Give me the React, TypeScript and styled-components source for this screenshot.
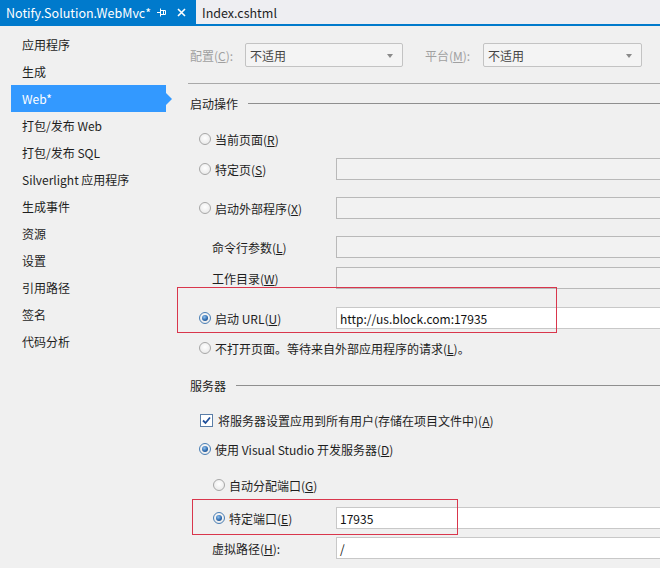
import React from "react";
import styled, { createGlobalStyle } from "styled-components";

const GlobalStyle = createGlobalStyle`
  html, body {
    margin: 0;
    padding: 0;
    overflow: hidden;
    background: #f0f0f0;
  }
  body {
    font-family: "Noto Sans CJK SC", "Noto Sans", sans-serif;
    font-size: 12px;
    color: #1e1e1e;
  }
`;

const Frame = styled.div`
  width: 676px;
  height: 568px;
  display: flex;
  flex-direction: column;
`;

const TabBar = styled.div`
  display: flex;
  height: 24px;
  border-bottom: 2px solid #007acc;
  background: #eeeef2;
`;

const ActiveTab = styled.div`
  width: 196px;
  box-sizing: border-box;
  background: #007acc;
  color: #fff;
  display: flex;
  align-items: center;
  padding: 0 0 0 6px;
  font-size: 12.5px;
`;

const TabTitle = styled.span`
  flex: 1;
  white-space: nowrap;
`;

const TabIcon = styled.svg`
  margin-right: 10px;
  flex: none;
`;

const Tab = styled.div`
  display: flex;
  align-items: center;
  padding: 0 6px;
  font-size: 12.5px;
  color: #1e1e1e;
`;

const Body = styled.div`
  display: flex;
  flex: 1;
  padding-top: 5px;
`;

const Sidebar = styled.div`
  width: 188px;
  flex: none;
`;

const SideItem = styled.div<{ $active?: boolean }>`
  position: relative;
  height: 27px;
  line-height: 27px;
  width: 155px;
  margin-left: 11px;
  padding-left: 11px;
  box-sizing: border-box;
  white-space: nowrap;
  background: ${({ $active }) => ($active ? "#3399ff" : "transparent")};
  color: ${({ $active }) => ($active ? "#fff" : "#1e1e1e")};

  &::after {
    content: "";
    display: ${({ $active }) => ($active ? "block" : "none")};
    position: absolute;
    right: -6px;
    top: 50%;
    margin-top: -6px;
    border-left: 6px solid #3399ff;
    border-top: 6px solid transparent;
    border-bottom: 6px solid transparent;
  }
`;

const Main = styled.div`
  flex: 1;
  padding-top: 12px;
`;

const ConfigRow = styled.div`
  display: flex;
  align-items: center;
  height: 24px;
  padding-left: 2px;
`;

const ConfigLabel = styled.span<{ $width: number }>`
  width: ${({ $width }) => $width}px;
  color: #a0a0a0;
  white-space: nowrap;
`;

const Select = styled.div<{ $width: number; $after?: number }>`
  position: relative;
  width: ${({ $width }) => $width}px;
  height: 24px;
  box-sizing: border-box;
  border: 1px solid #c3c3c3;
  border-radius: 2px;
  background: #f4f4f4;
  margin-right: ${({ $after }) => $after ?? 0}px;
  display: flex;
  align-items: center;
  padding-left: 4px;
  color: #444;

  &::after {
    content: "";
    position: absolute;
    right: 9px;
    top: 10px;
    border-top: 4px solid #8a8a8a;
    border-left: 3px solid transparent;
    border-right: 3px solid transparent;
  }
`;

const Divider = styled.div`
  height: 1px;
  background: #a9a9a9;
  margin-top: 16px;
`;

const SectionHeader = styled.div<{ $top: number }>`
  display: flex;
  align-items: center;
  height: 18px;
  margin-top: ${({ $top }) => $top}px;
  padding-left: 2px;

  &::after {
    content: "";
    flex: 1;
    height: 1px;
    background: #8f8f8f;
    margin-left: 10px;
  }
`;

const Row = styled.div<{ $top: number }>`
  position: relative;
  display: grid;
  grid-template-columns: 148px 1fr;
  align-items: center;
  height: 22px;
  margin-top: ${({ $top }) => $top}px;
`;

const Choice = styled.div<{ $indent: number; $wide?: boolean }>`
  display: flex;
  align-items: center;
  gap: 4px;
  padding-left: ${({ $indent }) => $indent}px;
  white-space: nowrap;
  grid-column: ${({ $wide }) => ($wide ? "1 / -1" : "auto")};
`;

const Caption = styled.span`
  white-space: nowrap;
`;

const Radio = styled.span<{ $checked?: boolean }>`
  position: relative;
  width: 12px;
  height: 12px;
  box-sizing: border-box;
  border-radius: 50%;
  flex: none;
  border: 1px solid ${({ $checked }) => ($checked ? "#4a7fb5" : "#a7a7a7")};
  background: radial-gradient(circle at 50% 40%, #ffffff 0%, #e4e4e4 100%);

  &::after {
    content: "";
    display: ${({ $checked }) => ($checked ? "block" : "none")};
    position: absolute;
    left: 2px;
    top: 2px;
    width: 6px;
    height: 6px;
    border-radius: 50%;
    background: radial-gradient(circle at 40% 35%, #8fc2f0 0%, #2a65a8 60%, #153f78 100%);
  }
`;

const CheckBox = styled.span`
  width: 13px;
  height: 13px;
  box-sizing: border-box;
  flex: none;
  border: 1px solid #5a7ea8;
  background: #fff;
  display: flex;
  align-items: center;
  justify-content: center;
  margin-right: 1px;
`;

const TextBox = styled.div<{ $enabled?: boolean }>`
  height: 22px;
  box-sizing: border-box;
  border: 1px solid ${({ $enabled }) => ($enabled ? "#c8c8c8" : "#b9b9b9")};
  border-right: none;
  background: ${({ $enabled }) => ($enabled ? "#ffffff" : "#f2f2f2")};
  display: flex;
  align-items: center;
  padding-left: 3px;
  color: #111;
  white-space: nowrap;
`;

const Mark = styled.div<{ $left: number; $top: number; $width: number; $height: number }>`
  position: absolute;
  left: ${({ $left }) => $left}px;
  top: ${({ $top }) => $top}px;
  width: ${({ $width }) => $width}px;
  height: ${({ $height }) => $height}px;
  border: 1px solid #d9364c;
  box-sizing: border-box;
  pointer-events: none;
`;

const sideItems = [
  "应用程序",
  "生成",
  "Web*",
  "打包/发布 Web",
  "打包/发布 SQL",
  "Silverlight 应用程序",
  "生成事件",
  "资源",
  "设置",
  "引用路径",
  "签名",
  "代码分析",
];

const PinIcon = () => (
  <TabIcon width="10" height="10" viewBox="0 0 10 10">
    <path d="M0 5.5H3M3.5 1.5V9.5M3.5 3.5H8.5V7.5H3.5M6.5 3.5V7.5" stroke="#fff" strokeWidth="1" fill="none" />
  </TabIcon>
);

const CloseIcon = () => (
  <TabIcon width="9" height="9" viewBox="0 0 9 9">
    <path d="M1 1L8 8M8 1L1 8" stroke="#fff" strokeWidth="1.6" />
  </TabIcon>
);

const CheckMark = () => (
  <svg width="9" height="9" viewBox="0 0 9 9">
    <path d="M1 4.5L3.5 7L8 1.5" stroke="#1f4f9a" strokeWidth="1.8" fill="none" />
  </svg>
);

const App = () => {
  return (
    <>
      <GlobalStyle />
      <Frame>
        <TabBar>
          <ActiveTab>
            <TabTitle>Notify.Solution.WebMvc*</TabTitle>
            <PinIcon />
            <CloseIcon />
          </ActiveTab>
          <Tab>Index.cshtml</Tab>
        </TabBar>
        <Body>
          <Sidebar>
            {sideItems.map((item, i) => (
              <SideItem key={item} $active={i === 2}>
                {item}
              </SideItem>
            ))}
          </Sidebar>
          <Main>
            <ConfigRow>
              <ConfigLabel $width={55}>
                配置(<u>C</u>):
              </ConfigLabel>
              <Select $width={158} $after={22}>不适用</Select>
              <ConfigLabel $width={58}>
                平台(<u>M</u>):
              </ConfigLabel>
              <Select $width={159}>不适用</Select>
            </ConfigRow>
            <Divider />
            <SectionHeader $top={10}>启动操作</SectionHeader>

            <Row $top={16}>
              <Choice $indent={11} $wide>
                <Radio />
                <Caption>当前页面(<u>R</u>)</Caption>
              </Choice>
            </Row>
            <Row $top={8}>
              <Choice $indent={11}>
                <Radio />
                <Caption>特定页(<u>S</u>)</Caption>
              </Choice>
              <TextBox />
            </Row>
            <Row $top={17}>
              <Choice $indent={11}>
                <Radio />
                <Caption>启动外部程序(<u>X</u>)</Caption>
              </Choice>
              <TextBox />
            </Row>
            <Row $top={17}>
              <Choice $indent={24}>
                <Caption>命令行参数(<u>L</u>)</Caption>
              </Choice>
              <TextBox />
            </Row>
            <Row $top={9}>
              <Choice $indent={24}>
                <Caption>工作目录(<u>W</u>)</Caption>
              </Choice>
              <TextBox />
            </Row>
            <Row $top={18}>
              <Choice $indent={11}>
                <Radio $checked />
                <Caption>启动 URL(<u>U</u>)</Caption>
              </Choice>
              <TextBox $enabled>http://us.block.com:17935</TextBox>
              <Mark $left={-11} $top={-20} $width={380} $height={46} />
            </Row>
            <Row $top={8}>
              <Choice $indent={11} $wide>
                <Radio />
                <Caption>不打开页面。等待来自外部应用程序的请求(<u>L</u>)。</Caption>
              </Choice>
            </Row>

            <SectionHeader $top={17}>服务器</SectionHeader>

            <Row $top={15}>
              <Choice $indent={12} $wide>
                <CheckBox>
                  <CheckMark />
                </CheckBox>
                <Caption>将服务器设置应用到所有用户(存储在项目文件中)(<u>A</u>)</Caption>
              </Choice>
            </Row>
            <Row $top={7}>
              <Choice $indent={11} $wide>
                <Radio $checked />
                <Caption>使用 Visual Studio 开发服务器(<u>D</u>)</Caption>
              </Choice>
            </Row>
            <Row $top={14}>
              <Choice $indent={25} $wide>
                <Radio />
                <Caption>自动分配端口(<u>G</u>)</Caption>
              </Choice>
            </Row>
            <Row $top={11}>
              <Choice $indent={25}>
                <Radio $checked />
                <Caption>特定端口(<u>E</u>)</Caption>
              </Choice>
              <TextBox $enabled>17935</TextBox>
              <Mark $left={4} $top={-8} $width={266} $height={36} />
            </Row>
            <Row $top={8}>
              <Choice $indent={24}>
                <Caption>虚拟路径(<u>H</u>):</Caption>
              </Choice>
              <TextBox $enabled>/</TextBox>
            </Row>
          </Main>
        </Body>
      </Frame>
    </>
  );
};

export default App;
